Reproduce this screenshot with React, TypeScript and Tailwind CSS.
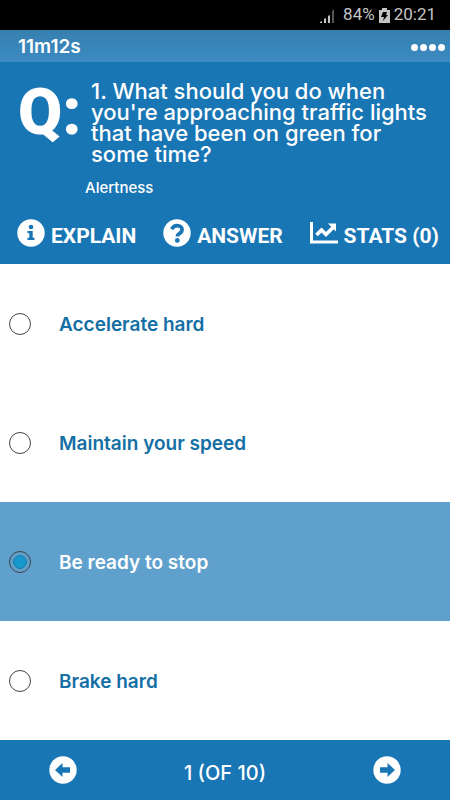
import { useState } from 'react';

const options = ['Accelerate hard', 'Maintain your speed', 'Be ready to stop', 'Brake hard'];

function SignalIcon() {
  return (
    <svg viewBox="0 0 15 15" className="mr-1 h-[15px] w-[15px]" aria-hidden="true">
      <path d="M0 15v-1l2-1v2zM4 15v-4l2-1v5zM8 15V8l2-1v8z" fill="#c4c4c4" />
      <path d="M12 15V3l2-2v14z" fill="#555" />
    </svg>
  );
}

function BatteryIcon() {
  return (
    <svg viewBox="0 0 11 15" className="h-[15px] w-[11px]" aria-hidden="true">
      <path d="M3 0h5v2h3v13H0V2h3z" fill="#c4c4c4" />
      <path d="M4 4h4L7 7h2l-5 6 1-4H2z" fill="#000" />
    </svg>
  );
}

function InfoIcon() {
  return (
    <svg viewBox="0 0 28 28" className="size-7 shrink-0" aria-hidden="true">
      <circle cx="14" cy="14" r="13.7" fill="#fff" />
      <circle cx="14" cy="8" r="2.3" fill="#1976b5" />
      <path d="M10.5 12h5.2v6.8h1.8V21h-7v-2.2h1.8v-4.6h-1.8z" fill="#1976b5" />
    </svg>
  );
}

function QuestionIcon() {
  return (
    <svg viewBox="0 0 28 28" className="size-7 shrink-0" aria-hidden="true">
      <circle cx="14" cy="14" r="13.7" fill="#fff" />
      <path
        d="M8.800 10.300c1.200-2.700 2.900-3.600 5.300-3.600 2.700 0 5 1.600 5 4.100 0 3.800-4.700 3.300-4.700 6.700"
        fill="none"
        stroke="#1976b5"
        strokeWidth="3.800"
      />
      <circle cx="14.300" cy="21.400" r="2.400" fill="#1976b5" />
    </svg>
  );
}

function ChartIcon() {
  return (
    <svg viewBox="0 0 28 28" className="size-7 shrink-0" aria-hidden="true">
      <path d="M1.5 3v20H28" fill="none" stroke="#fff" strokeWidth="3" />
      <path d="M6.500 16l5-5 4.500 4.500 7-7" fill="none" stroke="#fff" strokeWidth="3.600" />
      <path d="M18 4.500h8v8z" fill="#fff" />
    </svg>
  );
}

function ArrowIcon({ flipped = false }: { flipped?: boolean }) {
  return (
    <svg viewBox="0 0 28 28" className={flipped ? 'size-7 rotate-180' : 'size-7'} aria-hidden="true">
      <circle cx="14" cy="14" r="13.7" fill="#fff" />
      <path d="M6 14l7.5-7v4.2H21v5.6h-7.5V21z" fill="#1976b5" />
    </svg>
  );
}

export default function App() {
  const [selected, setSelected] = useState(2);

  return (
    <div className="flex min-h-screen flex-col bg-white font-['Inter',sans-serif] text-white">
      <div className="flex h-[30px] items-center justify-end gap-1 bg-black pr-[14px] font-['Roboto',sans-serif] text-[17px] text-[#c4c4c4]">
        <SignalIcon />
        <span>84%</span>
        <BatteryIcon />
        <span>20:21</span>
      </div>

      <header className="bg-[#1976b5]">
        <div className="flex h-8 items-center justify-between bg-linear-to-b from-[#3780b0] to-[#3b8ac2] pt-[2px] pr-[5px] pl-[18px]">
          <span className="text-[19px] font-semibold">11m12s</span>
          <button type="button" aria-label="Menu" className="flex gap-[2px]">
            <span className="size-[7px] rounded-full bg-white" />
            <span className="size-[7px] rounded-full bg-white" />
            <span className="size-[7px] rounded-full bg-white" />
            <span className="size-[7px] rounded-full bg-white" />
          </button>
        </div>

        <div className="flex h-[114px] pt-[19px] pr-4 pl-[18px]">
          <div className="w-[73px] shrink-0 font-['Roboto',sans-serif] text-[64px] leading-[64px] font-black">Q:</div>
          <h1 className="text-[22px] leading-[21px] font-medium">
            1. What should you do when you're approaching traffic lights that have been on green for some time?
          </h1>
        </div>
        <p className="pl-[85px] text-[15px] leading-6 font-medium">Alertness</p>

        <div className="flex h-16 items-center justify-between pt-[2px] pr-[11px] pl-[17px] font-['Roboto',sans-serif] text-[21px] leading-[22px] font-bold">
          <button type="button" className="flex items-end gap-[6px]">
            <InfoIcon />
            EXPLAIN
          </button>
          <button type="button" className="flex items-end gap-[6px]">
            <QuestionIcon />
            ANSWER
          </button>
          <button type="button" className="flex items-end gap-[6px]">
            <ChartIcon />
            STATS (0)
          </button>
        </div>
      </header>

      <main className="flex flex-1 flex-col">
        {options.map((option, index) => (
          <label
            key={option}
            className="flex min-h-16 flex-1 items-center gap-7 pl-[9px] text-[19px] font-semibold text-[#146fa4] has-checked:bg-[#60a0cc] has-checked:text-white"
          >
            <input
              type="radio"
              name="answer"
              checked={selected === index}
              onChange={() => setSelected(index)}
              className="flex size-[22px] shrink-0 appearance-none items-center justify-center rounded-full border border-[#444] before:size-[14px] before:rounded-full before:border before:border-[#2477a3] checked:before:bg-[#1599cd] not-checked:before:hidden"
            />
            <span className="pt-[3px]">{option}</span>
          </label>
        ))}
      </main>

      <footer className="flex h-[60px] items-center justify-between bg-[#1976b5] px-[49px]">
        <button type="button" aria-label="Previous question">
          <ArrowIcon />
        </button>
        <span className="pt-[6px] text-xl font-medium">1 (OF 10)</span>
        <button type="button" aria-label="Next question">
          <ArrowIcon flipped />
        </button>
      </footer>
    </div>
  );
}
